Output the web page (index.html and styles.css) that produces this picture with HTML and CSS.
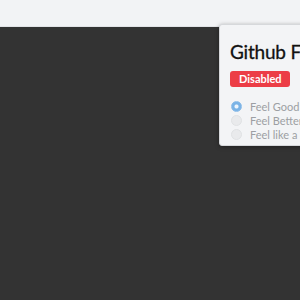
FILE: index.html
```html
<!DOCTYPE html>
<html lang="en">
<head>
  <meta charset="UTF-8" />
  <title>Github Feelings</title>
  <link rel="stylesheet" href="styles.css">
</head>
<body>
  <div class="topbar"></div>
  <div class="stage"></div>

  <div class="popover">
    <h2 class="title">Github Feelings</h2>
    <span class="badge">Disabled</span>
    <ul class="options">
      <li><span class="radio checked"></span>Feel Good</li>
      <li><span class="radio"></span>Feel Better</li>
      <li><span class="radio"></span>Feel like a Boss</li>
    </ul>
  </div>
</body>
</html>
```

FILE: styles.css
```css
:root {
  --bar: #f2f3f5;
  --stage: #333333;
  --panel: #f3f4f6;
  --border: #d6d8db;
  --red: #ec3d46;
  --muted: #9c9fa3;
}

html, body {
  margin: 0;
  height: 100%;
  overflow: hidden;
}

body {
  font-family: 'Lato', 'Liberation Sans', sans-serif;
  display: flex;
  flex-direction: column;
  background: var(--stage);
}

.topbar {
  height: 26px;
  background: var(--bar);
  border-bottom: 1px solid #e2e4e7;
}

.stage {
  flex: 1;
  background: var(--stage);
}

.popover {
  position: absolute;
  left: 219px;
  top: 24px;
  width: 220px;
  height: 122px;
  box-sizing: border-box;
  padding: 15px 10px 0;
  background: var(--panel);
  border: 1px solid var(--border);
  border-radius: 3px;
  box-shadow: 0 1px 4px rgba(0, 0, 0, 0.35);
}

.title {
  margin: 0;
  font-size: 19px;
  font-weight: 400;
  line-height: 24px;
  letter-spacing: -0.2px;
  color: #111;
  -webkit-text-stroke: 0.3px #111;
  white-space: nowrap;
}

.badge {
  display: block;
  width: max-content;
  margin-top: 7px;
  padding: 0 8px 0 9px;
  height: 16px;
  line-height: 16px;
  border-radius: 3px;
  background: var(--red);
  color: #fff;
  font-size: 11px;
  font-weight: 700;
}

.options {
  list-style: none;
  margin: 12px 0 0 1px;
  padding: 0;
}

.options li {
  display: flex;
  align-items: center;
  gap: 8px;
  height: 14px;
  font-size: 11px;
  color: var(--muted);
  white-space: nowrap;
}

.radio {
  width: 9px;
  height: 9px;
  border-radius: 50%;
  background: #e9eaec;
  border: 1px solid #e0e2e4;
  flex: none;
}

.radio.checked {
  background: radial-gradient(circle, #eef5fc 0 1.5px, #7ab3e6 2.5px);
  border-color: #8cbde9;
}
```
